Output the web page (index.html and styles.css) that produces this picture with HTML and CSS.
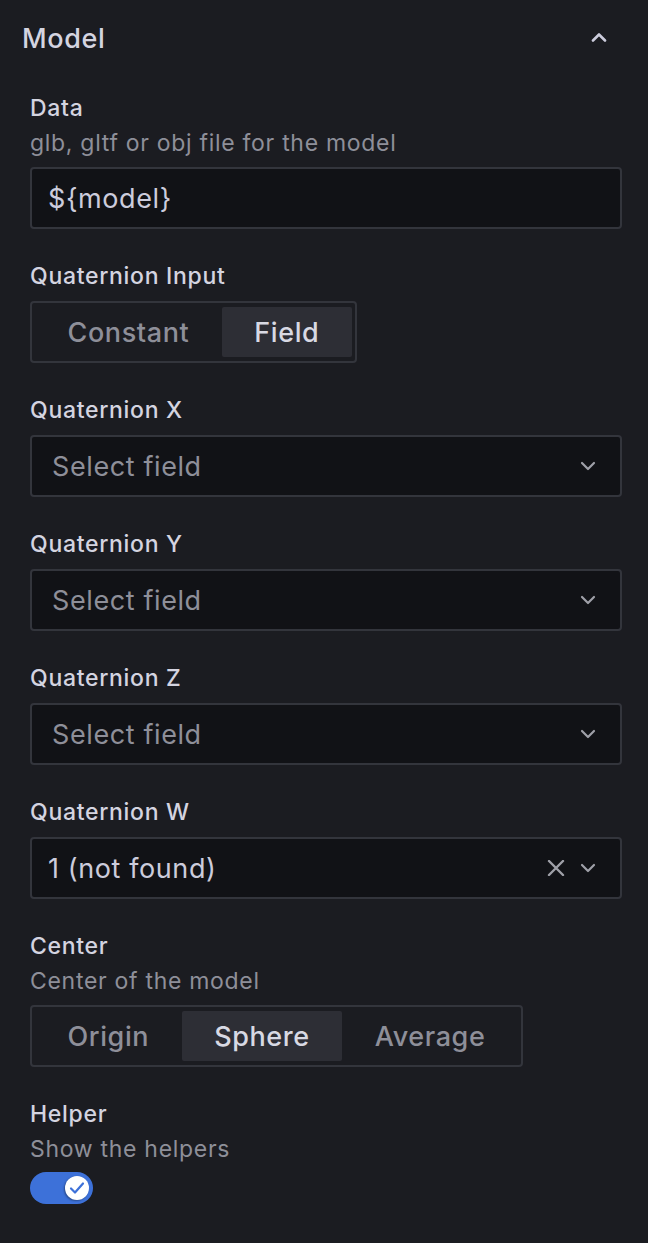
FILE: index.html
```html
<!DOCTYPE html>
<html>
<head>
<meta charset="utf-8">
<link rel="stylesheet" href="styles.css">
</head>
<body>
<div class="panel">
  <div class="group-header">
    <span class="group-title">Model</span>
    <svg class="chev-up" width="16" height="10" viewBox="0 0 16 10"><path d="M2 8.5 L8 2.5 L14 8.5" fill="none" stroke="#ccccdc" stroke-width="2.6" stroke-linecap="round" stroke-linejoin="round"/></svg>
  </div>
  <div class="group-body">
    <div class="field">
      <div class="label">Data</div>
      <div class="desc">glb, gltf or obj file for the model</div>
      <div class="input">${model}</div>
    </div>
    <div class="field">
      <div class="label">Quaternion Input</div>
      <div class="radio-group">
        <span class="radio">Constant</span>
        <span class="radio active">Field</span>
      </div>
    </div>
    <div class="field">
      <div class="label">Quaternion X</div>
      <div class="select">
        <span class="placeholder">Select field</span>
        <span class="icons"><svg class="chev" width="16" height="10" viewBox="0 0 16 10"><path d="M2 2 L8 8 L14 2" fill="none" stroke="#9fa0a8" stroke-width="2.2" stroke-linecap="round" stroke-linejoin="round"/></svg></span>
      </div>
    </div>
    <div class="field">
      <div class="label">Quaternion Y</div>
      <div class="select">
        <span class="placeholder">Select field</span>
        <span class="icons"><svg class="chev" width="16" height="10" viewBox="0 0 16 10"><path d="M2 2 L8 8 L14 2" fill="none" stroke="#9fa0a8" stroke-width="2.2" stroke-linecap="round" stroke-linejoin="round"/></svg></span>
      </div>
    </div>
    <div class="field">
      <div class="label">Quaternion Z</div>
      <div class="select">
        <span class="placeholder">Select field</span>
        <span class="icons"><svg class="chev" width="16" height="10" viewBox="0 0 16 10"><path d="M2 2 L8 8 L14 2" fill="none" stroke="#9fa0a8" stroke-width="2.2" stroke-linecap="round" stroke-linejoin="round"/></svg></span>
      </div>
    </div>
    <div class="field">
      <div class="label">Quaternion W</div>
      <div class="select">
        <span class="value">1 (not found)</span>
        <span class="icons">
          <svg class="xicon" width="18" height="16" viewBox="0 0 18 16"><path d="M2 1 L16 15 M16 1 L2 15" fill="none" stroke="#9fa0a8" stroke-width="2.4" stroke-linecap="round"/></svg>
          <svg class="chev" width="16" height="10" viewBox="0 0 16 10"><path d="M2 2 L8 8 L14 2" fill="none" stroke="#9fa0a8" stroke-width="2.2" stroke-linecap="round" stroke-linejoin="round"/></svg>
        </span>
      </div>
    </div>
    <div class="field">
      <div class="label">Center</div>
      <div class="desc">Center of the model</div>
      <div class="radio-group">
        <span class="radio">Origin</span>
        <span class="radio active">Sphere</span>
        <span class="radio">Average</span>
      </div>
    </div>
    <div class="field">
      <div class="label">Helper</div>
      <div class="desc">Show the helpers</div>
      <div class="switch">
        <span class="knob"><svg width="16" height="14" viewBox="0 0 16 14"><path d="M2 7.5 L6 11.5 L14 2.5" fill="none" stroke="#3d71d9" stroke-width="2.2" stroke-linecap="round" stroke-linejoin="round"/></svg></span>
      </div>
    </div>
  </div>
</div>
</body>
</html>
```

FILE: styles.css
```css
html, body {
  margin: 0;
  padding: 0;
  background: #1b1c21;
}
body {
  font-family: Inter, "Noto Sans", sans-serif;
  color: #ccccdc;
}
.panel {
  width: 648px;
  min-height: 1243px;
  background: #1b1c21;
}
.group-header {
  height: 76px;
  display: flex;
  align-items: center;
  justify-content: space-between;
  padding: 0 41px 0 22px;
  box-sizing: border-box;
}
.group-title {
  font-size: 27px;
  font-weight: 500;
  letter-spacing: 0.6px;
  color: #d4d4e0;
}
.chev-up {
  display: block;
  margin-top: -2px;
}
.group-body {
  padding: 15px 26px 0 30px;
}
.field {
  margin-bottom: 30px;
}
.label {
  font-size: 23px;
  font-weight: 500;
  line-height: 35px;
  letter-spacing: 0.7px;
  color: #d4d4e0;
}
.desc {
  font-size: 23px;
  font-weight: 400;
  line-height: 34px;
  letter-spacing: 0.7px;
  color: #8e8f99;
}
.input, .select {
  margin-top: 7px;
  height: 62px;
  box-sizing: border-box;
  border: 2px solid #33353c;
  border-radius: 4px;
  background: #111216;
  display: flex;
  align-items: center;
  font-size: 27px;
  letter-spacing: 0.6px;
  color: #ccccdc;
}
.input {
  padding-left: 16px;
}
.select {
  padding: 0 24px 0 16px;
  justify-content: space-between;
}
.placeholder {
  color: #8e8f99;
  padding-left: 4px;
}
.icons {
  display: flex;
  align-items: center;
  gap: 15px;
}
.chev, .xicon {
  display: block;
}
.radio-group {
  margin-top: 7px;
  display: inline-flex;
  height: 62px;
  box-sizing: border-box;
  border: 2px solid #33353c;
  border-radius: 4px;
  padding: 4px 3px;
}
.radio {
  display: flex;
  align-items: center;
  padding: 0 32.5px;
  font-size: 27px;
  font-weight: 500;
  letter-spacing: 0.6px;
  color: #8e8f99;
  border-radius: 2px;
}
.radio.active {
  background: #2d2e35;
  color: #d8d9e3;
}
.switch {
  margin-top: 6px;
  width: 63px;
  height: 32px;
  border-radius: 16px;
  background: #3d71d9;
  position: relative;
}
.knob {
  position: absolute;
  right: 4px;
  top: 4px;
  width: 24px;
  height: 24px;
  border-radius: 50%;
  background: #ffffff;
  box-shadow: -1px 1px 2px rgba(0,0,0,0.35);
  display: flex;
  align-items: center;
  justify-content: center;
}
.knob svg {
  display: block;
}
```
